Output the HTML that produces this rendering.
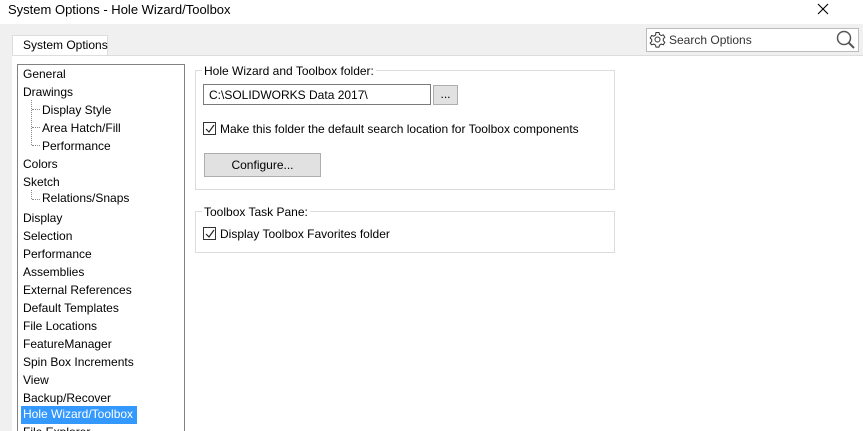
<!DOCTYPE html>
<html style="overflow:hidden;height:431px"><head><style>
*{margin:0;padding:0;box-sizing:border-box}
body{width:863px;height:431px;overflow:hidden;background:#f0f0f0;font-family:"Liberation Sans",sans-serif;font-size:12px;color:#000;position:relative}
.a{position:absolute;white-space:nowrap}
.cb{position:absolute;width:13px;height:13px;border:1px solid #333;background:#fff}
.cb svg{position:absolute;left:1px;top:1px}
</style></head><body>
<div class="a" style="left:0;top:0;width:863px;height:24px;background:#fff"></div>
<div class="a" style="left:8px;top:2px;font-size:13px">System Options - Hole Wizard/Toolbox</div>
<svg class="a" style="left:816px;top:2px" width="14" height="14"><path d="M2 2L12 12M12 2L2 12" stroke="#000" stroke-width="1.1"/></svg>
<div class="a" style="left:646px;top:28px;width:213px;height:24px;background:#fff;border:1px solid #bbb"></div>
<svg class="a" style="left:649px;top:31px" width="17" height="17" viewBox="0 0 17 17"><circle cx="8.5" cy="8.5" r="2.5" fill="none" stroke="#333"/><path d="M7 1.5h3l.5 2 1.8 1 2-.7 1.5 2.5-1.5 1.5v2l1.5 1.5-1.5 2.5-2-.7-1.8 1-.5 2H7l-.5-2-1.8-1-2 .7L1.2 12l1.5-1.5v-2L1.2 7l1.5-2.5 2 .7 1.8-1z" fill="none" stroke="#333"/></svg>
<div class="a" style="left:669px;top:33px;color:#333">Search Options</div>
<svg class="a" style="left:835px;top:29px" width="22" height="22"><circle cx="9" cy="9" r="6.5" fill="none" stroke="#555" stroke-width="1.5"/><path d="M13.5 13.5L19 19" stroke="#555" stroke-width="2"/></svg>
<div class="a" style="left:12px;top:35px;width:96px;height:22px;background:#fff;border:1px solid #ddd;border-bottom:none"></div>
<div class="a" style="left:23px;top:38px;font-size:12px">System Options</div>
<div class="a" style="left:12px;top:55px;width:851px;height:376px;background:#fff;border-top:1px solid #ddd"></div>
<div class="a" style="left:108px;top:55px;width:755px;height:1px;background:#ddd"></div>
<div class="a" style="left:17px;top:64px;width:168px;height:367px;border:1px solid #828282;border-bottom:none;background:#fff;overflow:hidden"></div>
<div class="a" style="left:23px;top:65px;line-height:18px">General<br>Drawings</div>
<div class="a" style="left:31px;top:100px;width:1px;height:45px;border-left:1px dotted #888"></div>
<div class="a" style="left:32px;top:109px;width:8px;border-top:1px dotted #888"></div>
<div class="a" style="left:32px;top:127px;width:8px;border-top:1px dotted #888"></div>
<div class="a" style="left:32px;top:145px;width:8px;border-top:1px dotted #888"></div>
<div class="a" style="left:42px;top:101px;line-height:18px">Display Style<br>Area Hatch/Fill<br>Performance</div>
<div class="a" style="left:23px;top:155px;line-height:18px">Colors<br>Sketch</div>
<div class="a" style="left:31px;top:190px;width:1px;height:9px;border-left:1px dotted #888"></div>
<div class="a" style="left:32px;top:199px;width:8px;border-top:1px dotted #888"></div>
<div class="a" style="left:42px;top:191px">Relations/Snaps</div>
<div class="a" style="left:23px;top:209px;line-height:18px">Display<br>Selection<br>Performance<br>Assemblies<br>External References<br>Default Templates<br>File Locations<br>FeatureManager<br>Spin Box Increments<br>View<br>Backup/Recover</div>
<div class="a" style="left:21px;top:406px;width:116px;height:18px;background:#3399ff"></div>
<div class="a" style="left:23px;top:407px;color:#fff">Hole Wizard/Toolbox</div>
<div class="a" style="left:23px;top:425px">File Explorer</div>
<div class="a" style="left:195px;top:70px;width:420px;height:120px;border:1px solid #dcdcdc"></div>
<div class="a" style="left:202px;top:64px;background:#fff;padding:0 2px">Hole Wizard and Toolbox folder:</div>
<div class="a" style="left:203px;top:84px;width:228px;height:21px;border:1px solid #7a7a7a"></div>
<div class="a" style="left:209px;top:88px">C:\SOLIDWORKS Data 2017\</div>
<div class="a" style="left:433px;top:85px;width:25px;height:20px;background:#e1e1e1;border:1px solid #adadad;text-align:center;line-height:17px">...</div>
<div class="cb" style="left:203px;top:122px"><svg width="10" height="10"><path d="M1 5l3 3 5-7" fill="none" stroke="#222" stroke-width="1.2"/></svg></div>
<div class="a" style="left:220px;top:122px">Make this folder the default search location for Toolbox components</div>
<div class="a" style="left:204px;top:153px;width:117px;height:24px;background:#e1e1e1;border:1px solid #adadad;text-align:center;line-height:22px">Configure...</div>
<div class="a" style="left:195px;top:211px;width:420px;height:42px;border:1px solid #dcdcdc"></div>
<div class="a" style="left:202px;top:205px;background:#fff;padding:0 2px">Toolbox Task Pane:</div>
<div class="cb" style="left:203px;top:227px"><svg width="10" height="10"><path d="M1 5l3 3 5-7" fill="none" stroke="#222" stroke-width="1.2"/></svg></div>
<div class="a" style="left:220px;top:227px">Display Toolbox Favorites folder</div>
</body></html>
